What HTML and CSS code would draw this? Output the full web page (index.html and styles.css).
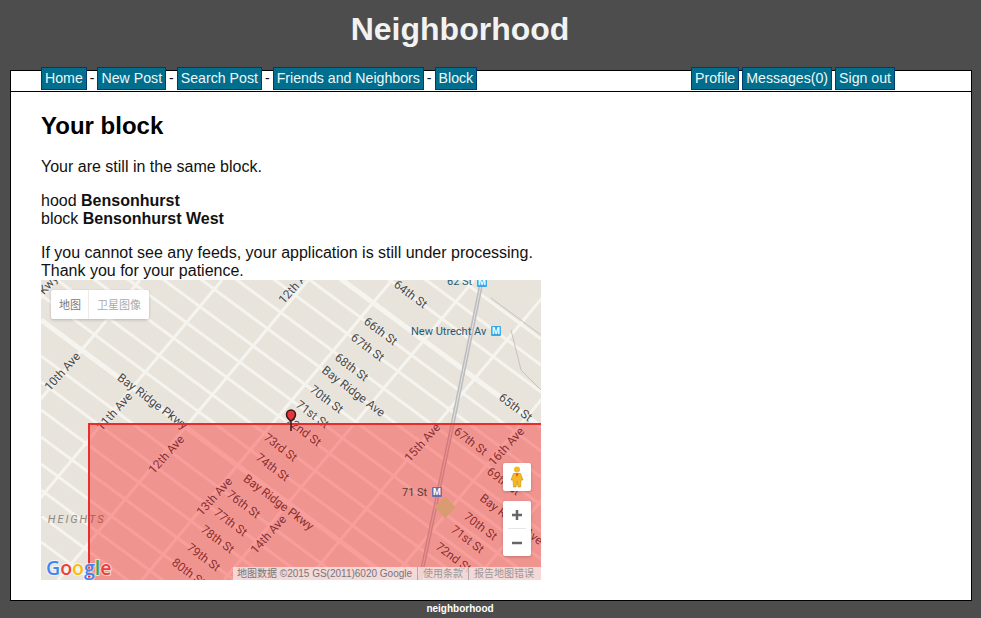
FILE: index.html
```html
<!DOCTYPE html>
<html lang="en">
<head>
    <meta charset="UTF-8">
    <title>Neighborhood</title>
    <link rel="stylesheet" href="styles.css">
</head>
<body>
<div class="header">
    <h1>Neighborhood</h1>
</div>
<div class="page">
    <div class="nav">
        <div class="nav-group">
            <a class="btn">Home</a><span class="sep">-</span>
            <a class="btn">New Post</a><span class="sep">-</span>
            <a class="btn">Search Post</a><span class="sep">-</span>
            <a class="btn">Friends and Neighbors</a><span class="sep">-</span>
            <a class="btn">Block</a>
        </div>
        <div class="nav-group nav-right">
            <a class="btn">Profile</a>
            <a class="btn">Messages(0)</a>
            <a class="btn">Sign out</a>
        </div>
    </div>
    <div class="content">
        <h2>Your block</h2>
        <p>Your are still in the same block.</p>
        <p>hood <b>Bensonhurst</b><br>block <b>Bensonhurst West</b></p>
        <p class="last">If you cannot see any feeds, your application is still under processing. Thank you for your patience.</p>
        <div class="map">
            <svg class="map-svg" width="500" height="300" viewBox="0 0 500 300">
                <rect width="500" height="300" fill="#e8e4dc"/>
                <!-- streets -->
                <path class="road" d="M0 -311L500 59M0 -285L500 85M0 -258L500 112M0 -199L500 171M0 -173L500 197M0 -145L500 225M0 -119L500 251M0 -91L500 279M0 -65L500 305M0 -40L500 330M0 -12L500 358M0 15L500 385M0 76L500 446M0 102L500 472M0 130L500 500M0 157L500 527M0 184L500 554M0 210L500 580M0 236L500 606M0 262L500 632"/>
                <path class="road wide" d="M0 -223L500 147M0 40L500 410"/>
                <!-- avenues -->
                <path class="road" d="M15 0L-235 300M99 0L-151 300M181 0L-69 300M267 0L17 300M351 0L101 300M433 0L183 300M516 0L266 300M600 0L350 300M684 0L434 300M768 0L518 300"/>
                <!-- subway -->
                <path class="rail" d="M441 0L413 137L379 300"/>
                <path class="rail-mid" d="M441 0L413 137L379 300"/>
                <path class="thin" d="M450 18L500 55M470 50L480 90L510 120"/>
                <polygon class="park" points="404,217 414,227 404,238 394,227"/>

                <g class="labels">
                    <text transform="translate(369 15) rotate(37)">64th St</text>
                    <text transform="translate(339 52) rotate(37)">66th St</text>
                    <text transform="translate(326 68) rotate(37)">67th St</text>
                    <text transform="translate(310 88) rotate(37)">68th St</text>
                    <text transform="translate(312 112) rotate(37)">Bay Ridge Ave</text>
                    <text transform="translate(285 120) rotate(37)">70th St</text>
                    <text transform="translate(271 135) rotate(37)">71st St</text>
                    <text transform="translate(262 152) rotate(37)">72nd St</text>
                    <text transform="translate(239 168) rotate(37)">73rd St</text>
                    <text transform="translate(231 188) rotate(37)">74th St</text>
                    <text transform="translate(474 128) rotate(37)">65th St</text>
                    <text transform="translate(111 122) rotate(37)">Bay Ridge Pkwy</text>
                    <text transform="translate(237 223) rotate(37)">Bay Ridge Pkwy</text>
                    <text transform="translate(202 225) rotate(37)">76th St</text>
                    <text transform="translate(189 243) rotate(37)">77th St</text>
                    <text transform="translate(176 260) rotate(37)">78th St</text>
                    <text transform="translate(162 278) rotate(37)">79th St</text>
                    <text transform="translate(147 293) rotate(37)">80th St</text>
                    <text transform="translate(429 162) rotate(37)">67th St</text>
                    <text transform="translate(462 202) rotate(37)">69th St</text>
                    <text transform="translate(470 240) rotate(37)">Bay Ridge Ave</text>
                    <text transform="translate(439 247) rotate(37)">70th St</text>
                    <text transform="translate(426 260) rotate(37)">71st St</text>
                    <text transform="translate(412 278) rotate(37)">72nd St</text>
                    <text transform="translate(22 92) rotate(-48)">10th Ave</text>
                    <text transform="translate(74 132) rotate(-48)">11th Ave</text>
                    <text transform="translate(126 175) rotate(-48)">12th Ave</text>
                    <text transform="translate(256 5) rotate(-48)">12th Ave</text>
                    <text transform="translate(174 217) rotate(-48)">13th Ave</text>
                    <text transform="translate(228 255) rotate(-48)">14th Ave</text>
                    <text transform="translate(382 163) rotate(-48)">15th Ave</text>
                    <text transform="translate(466 167) rotate(-48)">16th Ave</text>
                    <text transform="translate(8 5) rotate(-48)">Kwy</text>
                </g>
                <text class="area" x="-6" y="243">E HEIGHTS</text>
                <text class="station" x="406" y="5">62 St</text>
                <rect class="metro" x="436" y="-3" width="10" height="10" rx="1"/>
                <text class="metro-m" x="441" y="5">M</text>
                <text class="station" x="370" y="55">New Utrecht Av</text>
                <rect class="metro" x="450" y="46" width="10" height="10" rx="1"/>
                <text class="metro-m" x="455" y="54">M</text>

                <rect class="block-area" x="48" y="144" width="470" height="170"/>
                <text class="station dark" x="361" y="216">71 St</text>
                <rect class="metro dim" x="391" y="207" width="10" height="10" rx="1"/>
                <text class="metro-m" x="396" y="215">M</text>

                <!-- marker -->
                <path class="pin" d="M250 151L250 141C247 139 245.500 137 245.500 134.500A4.500 4.500 0 0 1 254.500 134.500C254.500 137 253 139 250 141Z"/>
                <text class="logo" x="5" y="295"><tspan fill="#4285f4">G</tspan><tspan fill="#ea4335">o</tspan><tspan fill="#fbbc05">o</tspan><tspan fill="#4285f4">g</tspan><tspan fill="#34a853">l</tspan><tspan fill="#ea4335">e</tspan></text>
            </svg>

            <div class="map-type">
                <span class="map-tab">地图</span>
                <span class="map-tab tab-sat">卫星图像</span>
            </div>
            <div class="map-box pegman">
                <svg width="14" height="22" viewBox="0 0 14 22">
                    <circle cx="7" cy="3.500" r="3" fill="#f5b922"/>
                    <path d="M3.500 7.500H10.500L13 14H11L10.500 21H8L7 15L6 21H3.500L3 14H1Z" fill="#f5b922" stroke="#c98a12" stroke-width=".6"/>
                    <path d="M5.500 7.500L7 11L8.500 7.500Z" fill="#d9541e"/>
                </svg>
            </div>
            <div class="map-box zoom">
                <span class="zoom-btn">
                    <svg width="12" height="12" viewBox="0 0 12 12"><path d="M6 1V11M1 6H11" stroke="#666" stroke-width="2.500" fill="none"/></svg>
                </span>
                <span class="zoom-line"></span>
                <span class="zoom-btn">
                    <svg width="12" height="12" viewBox="0 0 12 12"><path d="M1 6H11" stroke="#666" stroke-width="2.500" fill="none"/></svg>
                </span>
            </div>
            <div class="attrib">
                <span>地图数据 ©2015 GS(2011)6020 Google</span>
                <span class="attrib-link">使用条款</span>
                <span class="attrib-link">报告地图错误</span>
            </div>
        </div>
    </div>
</div>
<div class="footer">neighborhood</div>
</body>
</html>
```

FILE: styles.css
```css
*{
    box-sizing: border-box;
}
body{
    margin: 0;
    background: #4d4d4d;
    font-family: "Liberation Sans", Arial, sans-serif;
    font-size: 16px;
    color: #111;
}
.header{
    width: 920px;
    height: 70px;
    padding-top: 11px;
    text-align: center;
}
.header h1{
    margin: 0;
    font-size: 32px;
    line-height: 37px;
    color: #f2f2f2;
}
.page{
    width: 962px;
    height: 531px;
    margin-left: 10px;
    border: 1px solid #000;
    background: #fff;
}
.nav{
    display: flex;
    justify-content: space-between;
    height: 21px;
    padding: 0 76px 0 30px;
    border-bottom: 1px solid #000;
}
.nav-group{
    display: flex;
    align-items: flex-start;
    height: 23px;
    margin-top: -4px;
    font-size: 14.160px;
}
.nav-right{
    gap: 3px;
}
.btn{
    display: block;
    height: 23px;
    padding: 0 3px;
    border: 1px solid #003a70;
    background: #006e8c;
    color: #eef8fa;
    line-height: 21px;
    white-space: nowrap;
}
.sep{
    margin: 0 3px;
    line-height: 23px;
}
.content{
    padding: 20px 0 0 30px;
}
.content h2{
    margin: 0 0 19px;
    font-size: 24px;
    line-height: 27px;
    color: #000;
}
.content p{
    width: 500px;
    margin: 0 0 16px;
    line-height: 18px;
}
.content p.last{
    margin-bottom: 0;
}
.map{
    position: relative;
    width: 500px;
    height: 300px;
    overflow: hidden;
}
.map-svg{
    display: block;
}
.road{
    fill: none;
    stroke: #f6f4ef;
    stroke-width: 3;
}
.wide{
    stroke-width: 5;
}
.rail{
    fill: none;
    stroke: #bdbdc0;
    stroke-width: 4;
}
.rail-mid{
    fill: none;
    stroke: #e4e3e2;
    stroke-width: 1;
}
.thin{
    fill: none;
    stroke: #c6c3bd;
    stroke-width: 1;
}
.park{
    fill: #c5f0ac;
    stroke: #c5f0ac;
    stroke-width: 1;
    stroke-linejoin: round;
}
.labels text{
    font-family: Roboto, sans-serif;
    font-size: 12px;
    fill: #4a4a4a;
    text-anchor: middle;
    dominant-baseline: middle;
    stroke: #f3f1ec;
    stroke-width: 1.5px;
    stroke-opacity: .7;
    paint-order: stroke;
}
.area{
    font-family: Roboto, sans-serif;
    font-size: 11px;
    font-style: italic;
    letter-spacing: 2px;
    fill: #8c8a85;
}
.station{
    font-family: Roboto, sans-serif;
    font-size: 11px;
    fill: #1f5a73;
}
.dark{
    fill: #5a3a3a;
}
.metro{
    fill: #3aa8e8;
}
.dim{
    fill: #6a6ea8;
}
.metro-m{
    font-family: Roboto, sans-serif;
    font-size: 9px;
    font-weight: 700;
    fill: #fff;
    text-anchor: middle;
}
.block-area{
    fill: rgba(255, 0, 0, .35);
    stroke: #e82d2d;
    stroke-width: 2;
}
.pin{
    fill: #e8323c;
    stroke: #3a1414;
    stroke-width: 1.500;
}
.logo{
    font-family: "Open Sans", sans-serif;
    font-size: 19.500px;
    font-weight: 600;
    stroke: #fff;
    stroke-width: 2px;
    stroke-opacity: .6;
    paint-order: stroke;
}
.map-type{
    position: absolute;
    top: 10px;
    left: 10px;
    display: flex;
    height: 29px;
    background: #fff;
    border-radius: 2px;
    box-shadow: 0 1px 3px rgba(0, 0, 0, .2);
    font-family: "Noto Sans CJK SC", sans-serif;
    font-size: 11px;
    line-height: 28px;
    color: #777;
}
.map-tab{
    padding: 0 7px 0 8px;
}
.tab-sat{
    padding: 0 8px 0 8px;
    border-left: 1px solid #ebebeb;
    color: #aaa;
}
.map-box{
    position: absolute;
    left: 462px;
    width: 28px;
    background: #fff;
    border-radius: 2px;
    box-shadow: 0 1px 3px rgba(0, 0, 0, .2);
}
.pegman{
    top: 183px;
    height: 28px;
    padding: 3px 7px;
}
.pegman svg{
    display: block;
}
.zoom{
    top: 221px;
    height: 55px;
    display: flex;
    flex-direction: column;
    align-items: center;
}
.zoom-btn{
    display: flex;
    align-items: center;
    justify-content: center;
    height: 27px;
}
.zoom-line{
    width: 18px;
    height: 1px;
    background: #e6e6e6;
}
.attrib{
    position: absolute;
    right: 0;
    bottom: 0;
    display: flex;
    width: 308px;
    height: 13px;
    padding-left: 4px;
    background: rgba(245, 245, 245, .7);
    font-family: "Liberation Sans", "Noto Sans CJK SC", sans-serif;
    font-size: 10px;
    line-height: 13px;
    color: #777;
    white-space: nowrap;
}
.attrib-link{
    margin-left: 5px;
    padding-left: 5px;
    border-left: 1px solid #aaa;
    color: #999;
}
.footer{
    width: 920px;
    text-align: center;
    font-size: 10px;
    font-weight: 700;
    line-height: 16px;
    color: #fff;
}
```
